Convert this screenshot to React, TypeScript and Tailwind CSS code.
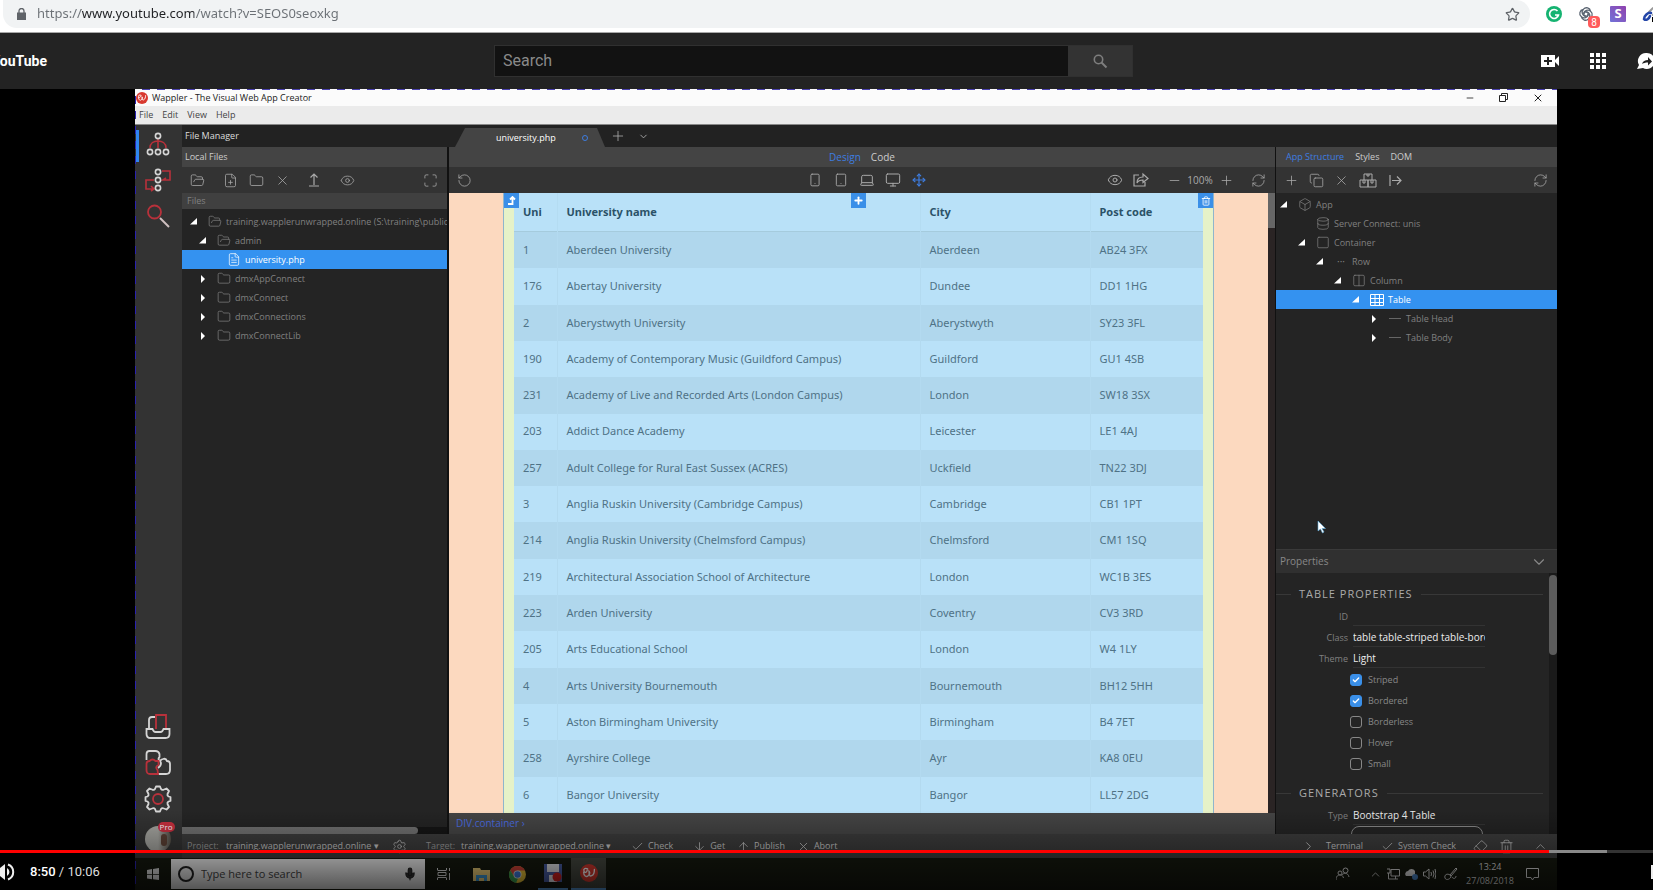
import type { ReactNode } from 'react'
import {
  ArrowDown,
  ArrowUp,
  Box,
  Check,
  ChevronDown,
  ChevronRight,
  ChevronUp,
  Columns2,
  Copy,
  Database,
  Eraser,
  Eye,
  FilePlus,
  FileText,
  Folder,
  FolderOpen,
  Laptop,
  Maximize,
  Mic,
  Minus,
  Monitor,
  Move,
  Plus,
  RefreshCw,
  RotateCcw,
  Settings,
  Smartphone,
  Square,
  Star,
  Tablet,
  Trash2,
  X,
} from 'lucide-react'

const unis = [
  ['1', 'Aberdeen University', 'Aberdeen', 'AB24 3FX'],
  ['176', 'Abertay University', 'Dundee', 'DD1 1HG'],
  ['2', 'Aberystwyth University', 'Aberystwyth', 'SY23 3FL'],
  ['190', 'Academy of Contemporary Music (Guildford Campus)', 'Guildford', 'GU1 4SB'],
  ['231', 'Academy of Live and Recorded Arts (London Campus)', 'London', 'SW18 3SX'],
  ['203', 'Addict Dance Academy', 'Leicester', 'LE1 4AJ'],
  ['257', 'Adult College for Rural East Sussex (ACRES)', 'Uckfield', 'TN22 3DJ'],
  ['3', 'Anglia Ruskin University (Cambridge Campus)', 'Cambridge', 'CB1 1PT'],
  ['214', 'Anglia Ruskin University (Chelmsford Campus)', 'Chelmsford', 'CM1 1SQ'],
  ['219', 'Architectural Association School of Architecture', 'London', 'WC1B 3ES'],
  ['223', 'Arden University', 'Coventry', 'CV3 3RD'],
  ['205', 'Arts Educational School', 'London', 'W4 1LY'],
  ['4', 'Arts University Bournemouth', 'Bournemouth', 'BH12 5HH'],
  ['5', 'Aston Birmingham University', 'Birmingham', 'B4 7ET'],
  ['258', 'Ayrshire College', 'Ayr', 'KA8 0EU'],
  ['6', 'Bangor University', 'Bangor', 'LL57 2DG'],
]

const options = [
  { name: 'Striped', on: true },
  { name: 'Bordered', on: true },
  { name: 'Borderless', on: false },
  { name: 'Hover', on: false },
  { name: 'Small', on: false },
]

const thin = { size: 15, strokeWidth: 1.25 }

function IconButton({ label, className = 'w-[26px]', children }: { label: string; className?: string; children: ReactNode }) {
  return (
    <button aria-label={label} className={`flex h-full shrink-0 items-center justify-center ${className}`}>
      {children}
    </button>
  )
}

function Arrow({ open }: { open: boolean }) {
  return (
    <svg width="8" height="8" viewBox="0 0 8 8" fill="#fff" className="shrink-0">
      {open ? <path d="M7 0v6.500H0z" /> : <path d="M2 0l4 4-4 4z" />}
    </svg>
  )
}

function TreeRow({ pad, open, icon, label, selected }: { pad: string; open?: boolean; icon: ReactNode; label: string; selected?: boolean }) {
  return (
    <li className={`flex h-[19px] items-center gap-[10px] overflow-hidden whitespace-nowrap ${pad} ${selected ? 'bg-[#3492f0] text-white' : 'text-[#808080]'}`}>
      <span className="flex w-2 shrink-0">{open !== undefined && <Arrow open={open} />}</span>
      <span className="flex items-center gap-1">
        <span className="flex w-[14px] shrink-0 justify-center">{icon}</span>
        {label}
      </span>
    </li>
  )
}

function WapplerMark({ size }: { size: number }) {
  return (
    <svg width={size} height={size} viewBox="0 0 20 20" className="shrink-0">
      <circle cx="10" cy="10" r="10" fill="#d8392f" />
      <path d="M8.500 5.500c-3-1.500-5 0-4 2.500s3 1 3.500-1M4 9c0 4 3 6 5 4s2-4 1-5c0 5 1 6 3 5s3-4 3-7" fill="none" stroke="#fff" strokeWidth="1.500" strokeLinecap="round" />
    </svg>
  )
}

function ChromeBar() {
  return (
    <div className="flex h-[33px] shrink-0 items-start border-b border-[#a8a8a8] bg-white pl-[3px]">
      <div className="flex h-7 flex-1 items-center rounded-r-full rounded-bl-full bg-[#f1f3f4] pr-[10px] pl-[14px]">
        <svg width="9" height="12" viewBox="0 0 9 12" className="shrink-0">
          <path d="M0 4.500h9V12H0z" fill="#5f6368" />
          <path d="M2 5V3a2.500 2.500 0 0 1 5 0v2" fill="none" stroke="#5f6368" strokeWidth="1.300" />
        </svg>
        <input
          aria-label="Address"
          defaultValue="https://www.youtube.com/watch?v=SEOS0seoxkg"
          className="ml-[11px] min-w-0 flex-1 bg-[linear-gradient(90deg,#6b7075_0_44px,#202124_44px_157px,#6b7075_157px)] bg-clip-text font-['Noto_Sans',sans-serif] text-[13px] text-transparent caret-black outline-none"
        />
        <Star size={15} stroke="#5f6368" strokeWidth={2} />
      </div>
      <div className="flex h-7 w-[123px] shrink-0 items-center gap-4 overflow-hidden pl-4">
        <svg width="16" height="16" viewBox="0 0 16 16" className="shrink-0">
          <circle cx="8" cy="8" r="8" fill="#15b371" />
          <path d="M11.500 5A4.500 4.500 0 1 0 12.500 9H9M12.500 9l-1.500 2" fill="none" stroke="#fff" strokeWidth="1.600" />
        </svg>
        <span className="relative shrink-0">
          <svg width="16" height="16" viewBox="0 0 16 16" fill="none" stroke="#5b6572" strokeWidth="1.300">
            <circle cx="8" cy="8" r="2.200" />
            <path d="M5.800 8a4 4 0 0 1 7-2.500 4 4 0 0 1-2 7M8 5.800a4 4 0 0 1 2.500 7 4 4 0 0 1-7-2M10.200 8a4 4 0 0 1-7 2.500 4 4 0 0 1 2-7M8 10.200a4 4 0 0 1-2.500-7 4 4 0 0 1 7 2" />
          </svg>
          <span className="absolute top-[10px] left-[10px] flex h-3 w-3 items-center justify-center rounded-sm bg-[#ff5a5a] font-[Roboto,sans-serif] text-[10px] text-white">8</span>
        </span>
        <span className="flex h-4 w-4 shrink-0 items-center justify-center rounded-[1px] bg-linear-to-tr from-[#6f72d8] to-[#8e3fae] font-['Open_Sans',sans-serif] text-[13px] font-bold text-white">S</span>
        <svg width="16" height="16" viewBox="0 0 16 16" fill="none" strokeLinecap="round" className="shrink-0">
          <path d="M7 6l3-3a2.500 2.500 0 0 1 4 3l-3 3" stroke="#999" strokeWidth="2" />
          <path d="M9 7c-3-1-7 3-7 6 2 2 5 0 6-3" stroke="#2446a8" strokeWidth="2.500" />
          <path d="M10 11h6v5h-6z" fill="#000" />
        </svg>
      </div>
    </div>
  )
}

function YouTubeHeader() {
  return (
    <header className="flex h-14 shrink-0 items-center bg-[#232323]">
      <a href="#" className="flex w-[47px] shrink-0 justify-end font-[Roboto,sans-serif] text-[14px] font-bold text-white">
        YouTube
      </a>
      <form className="mr-[408px] ml-[447px] flex h-8 flex-1 border border-[#303030] bg-[#121212]">
        <input
          aria-label="Search"
          placeholder="Search"
          className="min-w-0 flex-1 px-2 font-[Roboto,sans-serif] text-[16px] outline-none placeholder:text-[#8a8a8a]"
        />
        <button type="button" aria-label="Search" className="flex w-16 items-center justify-center bg-[#333]">
          <svg width="16" height="16" viewBox="0 0 16 16" fill="none" stroke="#7e7e7e" strokeWidth="1.600">
            <circle cx="6.500" cy="6.500" r="4.200" />
            <path d="M9.500 9.500l5 5" strokeWidth="2" />
          </svg>
        </button>
      </form>
      <div className="flex w-[112px] shrink-0 items-center overflow-hidden text-white">
        <button aria-label="Create" className="shrink-0">
          <svg width="18" height="12" viewBox="0 0 18 12" fill="currentColor">
            <path d="M0 0h14v12H0zM14 5l4-4v10l-4-4z" />
            <path d="M7 2v8M3 6h8" stroke="#232323" strokeWidth="2" />
          </svg>
        </button>
        <button aria-label="Apps" className="ml-[31px] grid shrink-0 grid-cols-3 gap-[2px]">
          {Array.from({ length: 9 }, (_, i) => (
            <span key={i} className="h-1 w-1 bg-white" />
          ))}
        </button>
        <button aria-label="Messages" className="ml-[31px] shrink-0">
          <svg width="18" height="18" viewBox="0 0 18 18" fill="currentColor">
            <path d="M9 1a8 8 0 1 1-3 15L0 17l2-4A8 8 0 0 1 9 1z" />
            <path d="M5 12c1-3 3-4 6-4V5l4 4.500-4 4V10.500c-3 0-4 .5-6 1.500z" fill="#232323" />
          </svg>
        </button>
      </div>
    </header>
  )
}

function Rail() {
  return (
    <nav className="flex w-[47px] shrink-0 flex-col items-center gap-2 bg-[#333] pt-[5px] pr-[2px] pb-[6px]">
      <button aria-label="Site structure" className="relative flex w-full justify-center">
        <span className="absolute top-0 left-px h-8 w-[3px] bg-[#2f86f0]" />
        <svg width="28" height="28" viewBox="0 0 28 28" fill="none" strokeWidth="1.600">
          <path d="M6 18c0-5 4-7 8-7s8 2 8 7M14 9v9" stroke="#b8313b" />
          <g stroke="#d5d5d5">
            <circle cx="14" cy="6" r="2.600" />
            <circle cx="6" cy="22" r="2.600" />
            <circle cx="14" cy="22" r="2.600" />
            <circle cx="22" cy="22" r="2.600" />
          </g>
        </svg>
      </button>
      <button aria-label="Workflows">
        <svg width="28" height="28" viewBox="0 0 28 28" fill="none" strokeWidth="1.600">
          <path d="M18 5h8v9h-7l3-2M10 14H2v9h8M7 20l3 3-3 2" stroke="#b8313b" />
          <g stroke="#d5d5d5">
            <circle cx="14" cy="6" r="2.600" />
            <circle cx="14" cy="14" r="2.600" />
            <circle cx="14" cy="22" r="2.600" />
          </g>
        </svg>
      </button>
      <button aria-label="Find">
        <svg width="28" height="28" viewBox="0 0 28 28" fill="none">
          <circle cx="10.500" cy="10" r="6.500" stroke="#b8313b" strokeWidth="1.800" />
          <path d="M16 16l9 9" stroke="#cfc0c0" strokeWidth="2" />
        </svg>
      </button>
      <button aria-label="Devices" className="mt-auto">
        <svg width="28" height="28" viewBox="0 0 28 28" fill="none" strokeWidth="1.800">
          <path d="M5 16V7q0-3 3-3h3M2.500 16h6q1 3 3 3h5q2 0 3-3h6v5q0 4-4 4h-15q-4 0-4-4z" stroke="#d5d5d5" />
          <path d="M12 16V2h10v13" stroke="#b8313b" />
        </svg>
      </button>
      <button aria-label="Extensions">
        <svg width="28" height="28" viewBox="0 0 28 28" fill="none" strokeWidth="1.800">
          <path d="M2.500 11V5q0-3 3-3h6q3 0 4 3v3q-2 2 0 4M14 25h8q4 0 4-4v-6q0-3-3-3-1-3-4-2-4 1-2 4 0 3-3 5" stroke="#d5d5d5" />
          <path d="M14 25H6q-3.500 0-3.500-4v-6q0-3 3-3 3-3 6 0h3v4q-4 2-1 5z" stroke="#b8313b" />
        </svg>
      </button>
      <button aria-label="Options">
        <svg width="28" height="28" viewBox="0 0 28 28" fill="none" strokeWidth="1.800" strokeLinejoin="round">
          <path d="M11 4l1-2.500h4L17 4q1 1.500 3 .5l2.500-1 2.500 2.500-1.500 3q-.5 1.500 1 2.500l2 .5v4l-2 .5q-1.500 1-1 2.500l1.500 3-2.500 2.500-2.500-1q-2-1-3 .5l-1 2.500h-4L11 24q-1-1.500-3-.5l-2.500 1L3 22l1.500-3q.5-1.500-1-2.500L1.500 16v-4l2-.5q1.500-1 1-2.500L3 6l2.500-2.500L8 4.500q2 1 3-.5z" stroke="#d5d5d5" />
          <circle cx="14" cy="14" r="5" stroke="#b8313b" />
        </svg>
      </button>
      <button aria-label="Account" className="relative mt-[5px] h-[26px] w-[26px] rounded-full bg-linear-to-r from-[#a5a5a0] via-[#a5a5a0] to-[#555048]">
        <span className="absolute top-2 right-1 h-3 w-[6px] rounded-full bg-[#5a3f33]" />
        <span className="absolute -top-1 -right-1 rounded-full bg-[#c9303f] px-[2px] font-['Open_Sans',sans-serif] text-[8px] leading-[10px] text-white">Pro</span>
      </button>
    </nav>
  )
}

function TabStrip() {
  return (
    <div className="flex h-[22px] shrink-0 items-end bg-[#222] pl-[3px] text-[9px] text-[#ddd]">
      <h2 className="w-[270px] self-center">File Manager</h2>
      <div className="flex h-[19px] w-[150px] items-center bg-[#444] pl-[41px] text-white [clip-path:polygon(0_100%,10px_0,142px_0,100%_100%)]">
        <span className="w-[86px]">university.php</span>
        <span className="h-[6px] w-[6px] rounded-full border border-[#3e7de0]" />
      </div>
      <IconButton label="New file" className="w-[26px] text-[#aaa]"><Plus size={16} strokeWidth={1.25} /></IconButton>
      <IconButton label="Open files" className="w-[24px] text-[#aaa]"><ChevronDown size={11} /></IconButton>
    </div>
  )
}

function FilePanel() {
  return (
    <section className="flex w-[267px] shrink-0 flex-col border-r-2 border-[#111] bg-[#242424] text-[9px]">
      <h3 className="flex h-5 shrink-0 items-center bg-[#444] pl-[3px] text-[#ccc]">Local Files</h3>
      <div className="flex h-[26px] shrink-0 items-center bg-[#333] pl-[2px] text-[#aaa]">
        <IconButton label="Open folder"><FolderOpen {...thin} /></IconButton>
        <IconButton label="New file" className="ml-[7px] w-[26px]"><FilePlus {...thin} /></IconButton>
        <IconButton label="New folder"><Folder {...thin} /></IconButton>
        <IconButton label="Delete"><X {...thin} /></IconButton>
        <IconButton label="Upload" className="ml-[6px] w-[26px]">
          <svg width="14" height="14" viewBox="0 0 14 14" fill="none" stroke="currentColor" strokeWidth="1.200"><path d="M7 12V1M3.500 4.500L7 1l3.500 3.500M2 13h10" /></svg>
        </IconButton>
        <IconButton label="Show hidden" className="ml-[7px] w-[26px]"><Eye {...thin} /></IconButton>
        <IconButton label="Expand" className="mr-1 ml-auto w-[26px]"><Maximize {...thin} /></IconButton>
      </div>
      <h4 className="flex h-4 shrink-0 items-center bg-[#404040] pl-[5px] text-[#808080]">Files</h4>
      <ul className="flex-1 overflow-hidden pt-[3px]">
        <TreeRow pad="pl-[8px]" open icon={<FolderOpen {...thin} />} label="training.wapplerunwrapped.online (S:\training\public" />
        <TreeRow pad="pl-[17px]" open icon={<FolderOpen {...thin} />} label="admin" />
        <TreeRow pad="pl-[27px]" icon={<FileText {...thin} />} label="university.php" selected />
        <TreeRow pad="pl-[17px]" open={false} icon={<Folder {...thin} />} label="dmxAppConnect" />
        <TreeRow pad="pl-[17px]" open={false} icon={<Folder {...thin} />} label="dmxConnect" />
        <TreeRow pad="pl-[17px]" open={false} icon={<Folder {...thin} />} label="dmxConnections" />
        <TreeRow pad="pl-[17px]" open={false} icon={<Folder {...thin} />} label="dmxConnectLib" />
      </ul>
      <div className="h-[7px] bg-[#151515]">
        <div className="h-full w-[89%] rounded-r-sm bg-[#707070]" />
      </div>
    </section>
  )
}

function DesignView() {
  return (
    <main className="flex min-w-0 flex-1 flex-col text-[9px]">
      <div className="flex h-5 shrink-0 items-center justify-center gap-[10px] bg-[#444]">
        <button className="text-[10px] text-[#3e7de0]">Design</button>
        <button className="text-[10px] text-[#ccc]">Code</button>
      </div>
      <div className="flex h-[26px] shrink-0 items-center bg-[#333] text-[#aaa]">
        <div className="flex h-full flex-1 pl-[2px]">
          <IconButton label="Undo"><RotateCcw {...thin} /></IconButton>
        </div>
        <div className="flex h-full pl-3">
          <IconButton label="Phone"><Smartphone size={14} strokeWidth={1.5} /></IconButton>
          <IconButton label="Tablet"><Tablet size={14} strokeWidth={1.5} /></IconButton>
          <IconButton label="Laptop"><Laptop size={16} strokeWidth={1.5} /></IconButton>
          <IconButton label="Desktop"><Monitor size={16} strokeWidth={1.5} /></IconButton>
          <IconButton label="Fluid" className="w-[26px] text-[#3e7de0]"><Move size={14} /></IconButton>
        </div>
        <div className="flex h-full flex-1 items-center justify-end pr-1">
          <IconButton label="Preview"><Eye size={16} strokeWidth={1.5} /></IconButton>
          <IconButton label="Open in browser">
            <svg width="16" height="16" viewBox="0 0 16 16" fill="none" stroke="currentColor" strokeWidth="1.200"><path d="M6 3H1v11h11v-4M4 11c0-4 2-6 6-6V2l5 4.500-5 4V8c-3 0-5 1-6 3z" /></svg>
          </IconButton>
          <IconButton label="Zoom out" className="ml-[7px] w-[26px]"><Minus {...thin} /></IconButton>
          <span className="w-[26px] text-center text-[10px]">100%</span>
          <IconButton label="Zoom in"><Plus {...thin} /></IconButton>
          <IconButton label="Refresh" className="ml-[6px] w-[26px]"><RefreshCw {...thin} /></IconButton>
        </div>
      </div>

      {/* Page canvas */}
      <div className="flex min-h-0 flex-1 bg-[#2a2424]">
        <div className="flex-1 overflow-hidden bg-[#fcd9bf] px-[54px]">
          <div className="relative h-full border-x border-[#8fb5cc] bg-[#e6f2c8] px-[10px]">
            <table className="h-[620px] w-full table-fixed border-collapse bg-[#b9e1f8] text-left font-['Noto_Sans',sans-serif] text-[11px] text-[#4f7286]">
              <colgroup>
                <col className="w-[43px]" />
                <col className="w-[363px]" />
                <col className="w-[170px]" />
                <col />
              </colgroup>
              <thead>
                <tr className="h-[38px] border-b border-[#a5cbdd] text-[12px] text-[#2b5268]">
                  {['Uni', 'University name', 'City', 'Post code'].map(h => (
                    <th key={h} scope="col" className="border-r border-[#b4dcf2] px-[9px] text-[11px] font-bold last:border-r-0">{h}</th>
                  ))}
                </tr>
              </thead>
              <tbody>
                {unis.map(row => (
                  <tr key={row[0]} className="odd:bg-[#b0d7ed]">
                    {row.map((cell, i) => (
                      <td key={i} className="border-r border-[#b3daf0] px-[9px] py-0 whitespace-nowrap last:border-r-0">{cell}</td>
                    ))}
                  </tr>
                ))}
              </tbody>
            </table>
            <div className="absolute inset-x-0 top-0 flex justify-between text-white">
              <button aria-label="Select parent" className="flex h-[15px] w-[15px] items-center justify-center bg-[#3a8fe8]">
                <svg width="9" height="9" viewBox="0 0 9 9" fill="none" stroke="currentColor" strokeWidth="1.800"><path d="M1 8h4.500V2M3 3.500L5.500 1 8 3.500" /></svg>
              </button>
              <button aria-label="Add" className="flex h-[15px] w-[15px] items-center justify-center bg-[#3a8fe8]"><Plus size={11} strokeWidth={4} /></button>
              <button aria-label="Remove" className="flex h-[15px] w-[15px] items-center justify-center bg-[#3a8fe8]"><Trash2 size={10} /></button>
            </div>
          </div>
        </div>
        <div className="w-[7px]">
          <div className="h-[35px] bg-[#666]" />
        </div>
      </div>
      <div className="flex h-[21px] shrink-0 items-center bg-[#444] pl-[7px] text-[10px] text-[#4a6ce0]">DIV.container ›</div>
    </main>
  )
}

function SectionTitle({ children }: { children: ReactNode }) {
  return (
    <div className="mb-[2px] flex h-5 items-center gap-2 pr-[6px]">
      <span className="h-px w-[15px] bg-[#383838]" />
      <h4 className="text-[11px] tracking-[1px] text-[#aaa]">{children}</h4>
      <span className="h-px flex-1 bg-[#383838]" />
    </div>
  )
}

function Field({ id, label, value }: { id: string; label: string; value: string }) {
  return (
    <div className="flex h-[21px] items-center gap-[5px]">
      <label htmlFor={id} className="w-[72px] text-right text-[#808080]">{label}</label>
      <input id={id} defaultValue={value} className="h-[18px] w-[132px] border-b border-[#333] bg-transparent text-[10px] text-[#eee] outline-none" />
    </div>
  )
}

function StructurePanel() {
  return (
    <aside className="relative flex w-[282px] shrink-0 flex-col border-l border-[#111] bg-[#242424] text-[9px]">
      <div className="flex h-5 shrink-0 items-center gap-[11px] bg-[#444] pl-[10px] text-[#ccc]">
        <button className="text-[#3e7de0]">App Structure</button>
        <button>Styles</button>
        <button>DOM</button>
      </div>
      <div className="flex h-[26px] shrink-0 items-center bg-[#333] pl-[2px] text-[#aaa]">
        <IconButton label="Add"><Plus {...thin} /></IconButton>
        <IconButton label="Duplicate" className="w-[25px]"><Copy {...thin} /></IconButton>
        <IconButton label="Delete" className="w-[25px]"><X {...thin} /></IconButton>
        <IconButton label="Components" className="w-[28px]">
          <svg width="18" height="15" viewBox="0 0 18 15" fill="none" stroke="currentColor"><path d="M5 7V1h8v6M8 1v2h2V1M1 7h8v7H1zM9 7h8v7H9zM4 7v3h2V7M12 7v3h2V7" /></svg>
        </IconButton>
        <IconButton label="Insert after">
          <svg width="13" height="11" viewBox="0 0 13 11" fill="none" stroke="currentColor" strokeWidth="1.200"><path d="M1 0v11M3 5.500h9M8 1.500l4 4-4 4" /></svg>
        </IconButton>
        <IconButton label="Refresh" className="mr-1 ml-auto w-[26px]"><RefreshCw {...thin} /></IconButton>
      </div>
      <ul className="flex-1 overflow-hidden pt-[2px]">
        <TreeRow pad="pl-[4px]" open icon={<Box {...thin} />} label="App" />
        <TreeRow pad="pl-[22px]" icon={<Database {...thin} />} label="Server Connect: unis" />
        <TreeRow pad="pl-[22px]" open icon={<Square {...thin} />} label="Container" />
        <TreeRow pad="pl-[40px]" open icon={<span className="text-[10px]">···</span>} label="Row" />
        <TreeRow pad="pl-[58px]" open icon={<Columns2 {...thin} />} label="Column" />
        <TreeRow
          pad="pl-[76px]"
          open
          selected
          icon={<svg width="14" height="12" viewBox="0 0 14 12" fill="none" stroke="currentColor" className="shrink-0"><path d="M.5.500h13v11H.500zM.5 4.500h13M.5 8.500h13M5 0v12M9.500 0v12" /></svg>}
          label="Table"
        />
        <TreeRow pad="pl-[94px]" open={false} icon={<span className="h-px w-3 bg-[#666]" />} label="Table Head" />
        <TreeRow pad="pl-[94px]" open={false} icon={<span className="h-px w-3 bg-[#666]" />} label="Table Body" />
      </ul>
      {/* Mouse pointer */}
      <svg width="10" height="14" viewBox="0 0 10 14" className="absolute top-[373px] left-[41px]">
        <path d="M1 1v10l2.500-2 2 4 1.500-1-2-3.500h3.500z" fill="#fff" stroke="#5aa9d8" strokeWidth=".6" />
      </svg>
      <button className="flex h-6 shrink-0 items-center justify-between border-t border-[#3a3a3a] bg-[#303030] pr-[9px] pl-1 text-[10px] text-[#888]">
        Properties
        <ChevronDown size={18} strokeWidth={1.5} />
      </button>
      <div className="flex h-[261px] shrink-0 overflow-hidden">
        <div className="min-w-0 flex-1 pt-[11px]">
          <SectionTitle>TABLE PROPERTIES</SectionTitle>
          <Field id="prop-id" label="ID" value="" />
          <Field id="prop-class" label="Class" value="table table-striped table-bordered" />
          <Field id="prop-theme" label="Theme" value="Light" />
          {options.map(o => (
            <label key={o.name} className="flex h-[21px] items-center gap-[6px] pl-[74px] text-[#888]">
              <span className="relative flex">
                <input
                  type="checkbox"
                  defaultChecked={o.on}
                  className="h-3 w-3 appearance-none rounded-[3px] border border-[#888] checked:border-[#3a8fe8] checked:bg-[#3a8fe8]"
                />
                {o.on && <Check size={8} strokeWidth={4} className="pointer-events-none absolute top-[2px] left-[2px] text-white" />}
              </span>
              {o.name}
            </label>
          ))}
          <div className="h-[9px]" />
          <SectionTitle>GENERATORS</SectionTitle>
          <Field id="prop-type" label="Type" value="Bootstrap 4 Table" />
          <button aria-label="Open generator" className="ml-[75px] block h-6 w-[132px] rounded-lg border border-[#888]" />
        </div>
        <div className="w-2 bg-[#1a1a1a] pt-[2px]">
          <div className="h-20 rounded-sm bg-[#5c5c5c]" />
        </div>
      </div>
    </aside>
  )
}

function StatusBar() {
  return (
    <div className="flex h-6 shrink-0 items-center bg-[#3c3c3c] pl-[5px] text-[9px] text-[#c4c4c4] [&_svg]:shrink-0">
      <span className="w-[39px] text-[#999]">Project:</span>
      <button className="w-[160px] text-left">training.wapplerunwrapped.online ▾</button>
      <IconButton label="Project settings" className="mr-[14px] w-[26px]"><Settings {...thin} /></IconButton>
      <span className="w-[35px] text-[#999]">Target:</span>
      <button className="w-[155px] text-left">training.wapperunwrapped.online ▾</button>
      <button className="ml-[15px] flex items-center gap-1"><Check size={13} strokeWidth={1.5} />Check</button>
      <button className="ml-[20px] flex items-center gap-1"><ArrowDown size={13} strokeWidth={1.5} />Get</button>
      <button className="ml-[12px] flex items-center gap-1"><ArrowUp size={13} strokeWidth={1.5} />Publish</button>
      <button className="ml-[12px] flex items-center gap-1"><X size={13} strokeWidth={1.5} />Abort</button>
      <div className="ml-auto flex h-full items-center pr-1">
        <ChevronRight size={15} strokeWidth={1.5} />
        <button className="ml-[10px]">Terminal</button>
        <button className="ml-[18px] flex items-center gap-1"><Check size={13} strokeWidth={1.5} />System Check</button>
        <IconButton label="Clear" className="ml-[11px] w-[26px]"><Eraser {...thin} /></IconButton>
        <IconButton label="Trash"><Trash2 {...thin} /></IconButton>
        <IconButton label="Expand" className="ml-2 w-[26px]"><ChevronUp {...thin} /></IconButton>
      </div>
    </div>
  )
}

function Taskbar() {
  return (
    <div className="flex h-8 shrink-0 items-center bg-[#16190f] text-[#ddd]">
      <IconButton label="Start" className="w-9">
        <svg width="12" height="12" viewBox="0 0 12 12" fill="currentColor"><path d="M0 2l5-1v5H0zM6 1l6-1v6H6zM0 6.800h5v4.500l-5-.8zM6 6.800h6V12l-6-.8z" /></svg>
      </IconButton>
      <label className="flex h-[30px] w-[254px] items-center bg-[#f0f0f0] px-[7px] text-[#222]">
        <span className="h-4 w-4 rounded-full border-2 border-[#222]" />
        <input aria-label="Taskbar search" placeholder="Type here to search" className="ml-[7px] min-w-0 flex-1 bg-transparent text-[11px] outline-none placeholder:text-[#444]" />
        <Mic size={14} fill="#333" className="mr-px" />
      </label>
      <IconButton label="Task view" className="w-9">
        <svg width="13" height="12" viewBox="0 0 13 12" fill="none" stroke="currentColor"><path d="M.5 0v2M.5 12v-2M9.500 0v2M9.500 12v-2M.5 2.500h9M.5 9.500h9M1 4.500h8v3H1zM12.500 0v3M12.500 5v7" /></svg>
      </IconButton>
      <IconButton label="File Explorer" className="ml-[2px] w-9">
        <svg width="17" height="15" viewBox="0 0 17 15"><path d="M0 1h7l1 2h9v11H0z" fill="#efcf7a" /><path d="M3 8h11v6h-3v-3H6v3H3z" fill="#3e9ad6" /></svg>
      </IconButton>
      <IconButton label="Chrome" className="w-9">
        <svg width="17" height="17" viewBox="0 0 17 17">
          <circle cx="8.500" cy="8.500" r="8.500" fill="#e8c238" />
          <path d="M1.200 4.200A8.500 8.500 0 0 1 16 4.500H8.500L5 10.500z" fill="#d8443a" />
          <path d="M1.200 4.200L5 10.500l4 2-2 4.500A8.500 8.500 0 0 1 1.200 4.200z" fill="#3aa050" />
          <circle cx="8.500" cy="8.500" r="4" fill="#eee" />
          <circle cx="8.500" cy="8.500" r="3.200" fill="#3f7de0" />
        </svg>
      </IconButton>
      <IconButton label="Recorder" className="mx-[3px] w-[30px] border-b-2 border-[#5a9ee0]">
        <svg width="18" height="18" viewBox="0 0 18 18"><path d="M0 0h18v18H0z" fill="#4a5fa8" /><path d="M3 0h12v8H3zM5 11h8v7H5z" fill="#e8e8ee" /><circle cx="13" cy="13" r="4.500" fill="#d82020" /></svg>
      </IconButton>
      <IconButton label="Wappler" className="w-[35px] border-b-2 border-[#5a9ee0] bg-[#454840]"><WapplerMark size={18} /></IconButton>

      <div className="ml-auto flex h-full items-center gap-[5px] pr-[18px]">
        <svg width="14" height="14" viewBox="0 0 14 14" fill="none" stroke="currentColor" className="mr-[14px]"><circle cx="9.500" cy="3.500" r="2.500" /><circle cx="4" cy="6" r="2" /><path d="M0 13c0-4 2-5 4-5s3 1 3.500 3M6 8c1-2 6-3 7 2" /></svg>
        <ChevronUp size={13} strokeWidth={1.5} />
        <svg width="13" height="12" viewBox="0 0 13 12" fill="none" stroke="currentColor"><path d="M4 1.500h8.500v6.500H4zM6 11h5M8.500 8v3M0 1h3v4H0M1.500 5v6H6" /></svg>
        <svg width="13" height="12" viewBox="0 0 13 12" fill="currentColor"><path d="M1 8a3 3 0 0 1 2-5 4 4 0 0 1 7 0v5z" /><circle cx="10" cy="9" r="3" fill="#4b86c8" /></svg>
        <svg width="13" height="12" viewBox="0 0 13 12" fill="none" stroke="currentColor"><path d="M.5 4v4h2L6 11V1L2.500 4zM8 4q1 2 0 4M10 2.500q2 3.500 0 7M12 1q2 5 0 10" /></svg>
        <svg width="14" height="14" viewBox="0 0 14 14" fill="none" stroke="currentColor" className="ml-[3px]"><path d="M6 8l6-7 1 1-6 7zM6 8c-3-2-6 0-5 3s6 1 6-2M8 10c1 2 4 2 4-1" /></svg>
        <time className="mx-[2px] w-[50px] text-center text-[9px] leading-[14px]">13:24<br />27/08/2018</time>
        <svg width="13" height="13" viewBox="0 0 13 13" fill="none" stroke="currentColor" className="ml-1"><path d="M.5.500h12v9H8L6.500 12 5 9.500H.500z" /></svg>
      </div>
    </div>
  )
}

function WapplerWindow() {
  return (
    <div className="relative mr-[96px] ml-[135px] flex min-w-0 flex-1 flex-col overflow-hidden font-['Open_Sans',sans-serif]">
      <div className="flex h-[17px] shrink-0 items-center bg-[#fbfbfb] pr-[13px] pl-[1px] text-[9px] text-[#222]">
        <WapplerMark size={12} />
        <span className="ml-1">Wappler - The Visual Web App Creator</span>
        <div className="ml-auto flex items-center gap-[24px]">
          <button aria-label="Minimize"><Minus size={10} /></button>
          <button aria-label="Restore"><svg width="9" height="9" viewBox="0 0 9 9" fill="none" stroke="#222"><path d="M.5 2.500h6v6h-6zM2.500 2.500v-2h6v6h-2" /></svg></button>
          <button aria-label="Close"><X size={12} /></button>
        </div>
      </div>
      <nav className="flex h-[19px] shrink-0 items-center gap-[9px] border-b border-[#888] bg-[#ebebeb] pl-1 text-[9px] text-[#444]">
        <button>File</button>
        <button>Edit</button>
        <button>View</button>
        <button>Help</button>
      </nav>
      <div className="flex min-h-0 flex-1">
        <Rail />
        <div className="flex min-w-0 flex-1 flex-col">
          <TabStrip />
          <div className="flex min-h-0 flex-1">
            <FilePanel />
            <DesignView />
            <StructurePanel />
          </div>
          <StatusBar />
        </div>
      </div>
      <Taskbar />
      {/* Capture frame */}
      <div className="absolute inset-x-0 top-0 h-px bg-[repeating-linear-gradient(90deg,transparent_0_7px,#4a41ad_7px_15px)]" />
      <div className="absolute inset-y-0 left-0 w-px bg-[repeating-linear-gradient(180deg,transparent_0_7px,#2a22b0_7px_15px)]" />
    </div>
  )
}

function PlayerControls() {
  return (
    <div className="absolute inset-x-0 bottom-0 flex h-20 flex-col justify-end bg-linear-to-b from-transparent to-black/65">
      <div className="flex h-[3px] bg-[#333]">
        <div className="w-[1549px] bg-[#f00]" />
        <div className="w-[58px] bg-[#888]" />
      </div>
      <div className="flex h-[37px] items-center text-white">
        <button aria-label="Mute" className="w-[16px] overflow-hidden">
          <svg width="16" height="18" viewBox="0 0 16 18" fill="#eee"><path d="M0 5l5-4v16l-5-4zM7 5a4.500 4.500 0 0 1 0 8z" /><path d="M8 1.500a8 8 0 0 1 0 15" fill="none" stroke="#eee" strokeWidth="2" /></svg>
        </button>
        <span className="ml-[14px] font-[Roboto,sans-serif] text-[13px] text-[#ddd]">
          <span className="font-medium text-white">8:50</span> / 10:06
        </span>
        <span className="ml-auto h-[14px] w-[2px] bg-[#eee]" />
      </div>
    </div>
  )
}

export default function App() {
  return (
    <div className="flex h-screen flex-col overflow-hidden bg-black">
      <ChromeBar />
      <YouTubeHeader />
      <div className="relative flex min-h-0 flex-1 bg-black">
        <WapplerWindow />
        <PlayerControls />
      </div>
    </div>
  )
}
